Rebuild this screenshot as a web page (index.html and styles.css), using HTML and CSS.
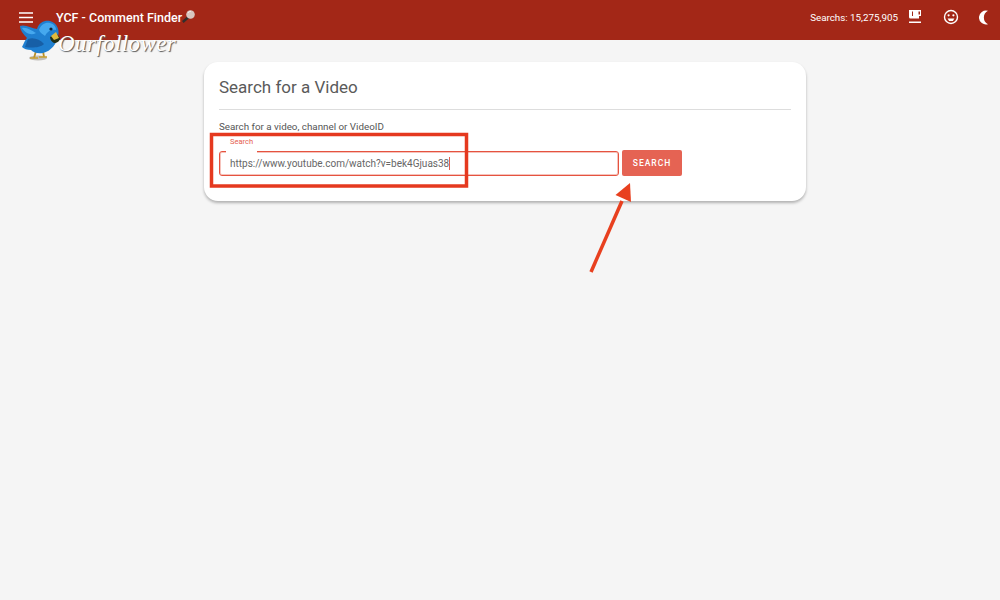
FILE: index.html

```html
<!DOCTYPE html>
<html lang="en">
<head>
    <meta charset="UTF-8">
    <meta name="viewport" content="width=device-width, initial-scale=1.0">
    <title>YCF - Comment Finder</title>
    <link rel="stylesheet" href="styles.css">
</head>
<body>

    <header class="topbar">
        <div class="topbar-left">
            <svg class="menu-icon" width="14" height="11" viewBox="0 0 14 11"><path d="M0 1h14M0 5.500h14M0 10h14" stroke="#fff" stroke-width="1.400" fill="none"/></svg>
            <span class="app-title">YCF - Comment Finder</span>
            <svg class="lens-icon" width="14" height="15" viewBox="0 0 14 15">
                <path d="M6.500 8 .8 13" stroke="#332e2c" stroke-width="2.400"/>
                <circle cx="8.500" cy="5.500" r="4.300" fill="#d8c6bf"/>
                <path d="M6 4A3 3 0 0 1 9 2.300" stroke="#f3ebe7" fill="none"/>
            </svg>
        </div>
        <div class="topbar-right">
            <span class="search-count">Searchs: 15,275,905</span>
            <svg class="cup-icon" width="14" height="14" viewBox="0 0 14 14"><path fill="#fff" d="M1 0h12v6h-2v2.500H2.500A1.500 1.500 0 0 1 1 7zM10.500 1.500V4.500H12V1.500zM1 11.500h12V13H1z"/><path fill="#a32717" d="M4 1.500h1V6H4z"/></svg>
            <svg class="face-icon" width="16" height="16" viewBox="0 0 16 16">
                <circle cx="8" cy="8" r="6.500" fill="none" stroke="#fff" stroke-width="1.400"/>
                <circle cx="5.600" cy="6.300" r="1.100" fill="#fff"/>
                <circle cx="10.400" cy="6.300" r="1.100" fill="#fff"/>
                <path d="M4.600 9.400h6.800A3.500 3.500 0 0 1 4.600 9.400z" fill="#fff"/>
            </svg>
            <svg class="moon-icon" width="10" height="15" viewBox="0 0 10 14"><path fill="#fff" d="M9 .3A7 7 0 1 0 9 13.700 7.500 7.500 0 0 1 9 .3z"/></svg>
        </div>
    </header>

    <main class="page">
        <section class="card">
            <h2 class="card-title">Search for a Video</h2>
            <p class="card-label">Search for a video, channel or VideoID</p>
            <div class="search-row">
                <div class="search-field">
                    <span class="field-label">Search</span>
                    <span class="field-value">https://www.youtube.com/watch?v=bek4Gjuas38</span>
                    <span class="caret"></span>
                </div>
                <button class="search-button">SEARCH</button>
            </div>
        </section>
    </main>

    <!-- watermark over the header -->
    <div class="watermark">
        <svg width="44" height="44" viewBox="0 0 44 44">
            <ellipse cx="19" cy="40" rx="9" ry="2.500" fill="#8f8a80" opacity="0.5"/>
            <path d="M17 33 15 40M24 33l1 6" stroke="#b8902a" stroke-width="1.800" fill="none"/>
            <path d="M11 40h8M20 39h8" stroke="#c9a02f" stroke-width="1.600"/>
            <path fill="#1f7fd0" d="M1 8C6 6 12 10 18 11 20 4 26 2 31 3 38 5 41 12 39 18 38 26 32 33 24 35 18 36 14 34 12 32 8 32 5 31 3 29 5 25 6 22 8 20 4 16 1 12 1 8z"/>
            <path fill="#45a8ee" d="M20 12C22 6 27 4 31 5 35 6 37 9 37 12 32 11 28 14 26 18 24 16 21 15 20 12zM3 10C8 9 13 13 17 15 12 18 6 15 3 10z"/>
            <path fill="#175fa6" d="M9 21C14 19 21 21 25 26 21 30 12 30 6 29 7 26 8 24 9 21z"/>
            <path fill="#223018" d="M31 19 38 16 41 20C41 23 38 25 35 25 33 24 31 22 31 19z"/>
            <path fill="#e0b93c" d="M32 18 37 14 40 20 35 22z"/>
            <circle cx="32" cy="11" r="1.600" fill="#10243a"/>
        </svg>
        <span class="watermark-text">Ourfollower</span>
    </div>

    <!-- annotations drawn on top of the screenshot -->
    <svg class="annotation" width="1000" height="600" viewBox="0 0 1000 600">
        <rect x="211.500" y="134.500" width="255" height="51.500" fill="none" stroke="#e5391f" stroke-width="3.500"/>
        <path d="M591 272 622 201" stroke="#e8401f" stroke-width="3.500" fill="none"/>
        <path d="M630 183 615.500 195 631 202z" fill="#e8401f"/>
    </svg>

</body>
</html>
```

FILE: styles.css

```css
body {
    font-family: 'Roboto', sans-serif;
    margin: 0;
    padding: 0;
    background-color: #f5f5f5;
    color: #555;
    height: 600px;
    overflow: hidden;
}
.topbar {
    display: flex;
    justify-content: space-between;
    align-items: center;
    box-sizing: border-box;
    height: 40px;
    padding-bottom: 6px;
    background-color: #a32717;
    color: white;
    font-weight: 500;
}
.topbar-left {
    display: flex;
    align-items: center;
    padding-left: 19px;
}
.menu-icon {
    margin-right: 23px;
}
.app-title {
    font-size: 12.500px;
}
.lens-icon {
    margin-left: 0;
    margin-top: -1px;
}
.topbar-right {
    display: flex;
    align-items: center;
    padding-right: 11px;
}
.search-count {
    font-size: 9.800px;
    font-weight: 400;
    margin-right: 10px;
}
.cup-icon {
    margin-right: 21px;
}
.face-icon {
    margin-right: 20px;
}
.page {
    display: flex;
    justify-content: center;
    padding: 22px 0 0 10px;
}
.card {
    width: 602px;
    height: 139px;
    box-sizing: border-box;
    padding: 15px;
    background-color: white;
    border-radius: 14px;
    box-shadow: 0px 2px 3px rgba(0, 0, 0, 0.28);
}
.card-title {
    margin: 0;
    padding-bottom: 11px;
    border-bottom: 1px solid #ddd;
    font-size: 17px;
    font-weight: 400;
    line-height: 21px;
    color: #5a5a5a;
}
.card-label {
    margin: 11px 0 0;
    font-size: 9.800px;
    line-height: 12px;
    color: #555;
}
.search-row {
    display: flex;
    align-items: center;
    gap: 3px;
    margin-top: 17px;
}
.search-field {
    position: relative;
    display: flex;
    align-items: center;
    box-sizing: border-box;
    width: 400px;
    height: 25px;
    padding-left: 10px;
    border: 1px solid #e5533f;
    border-radius: 3px;
    box-shadow: inset 0 0 0 1px rgba(229, 83, 63, 0.35);
}
.field-label {
    position: absolute;
    top: -15px;
    left: 6px;
    padding: 0 4px 7px;
    background-color: white;
    font-size: 7.500px;
    line-height: 9px;
    color: #e5604e;
}
.field-value {
    font-size: 10px;
    color: #666;
}
.caret {
    width: 1px;
    height: 13px;
    background-color: #e5604e;
}
.search-button {
    width: 60px;
    height: 26px;
    padding: 0;
    border: none;
    border-radius: 2px;
    background-color: #e56353;
    color: white;
    font-family: 'Roboto', sans-serif;
    font-size: 8.500px;
    font-weight: 500;
    letter-spacing: 1px;
}
.watermark {
    position: absolute;
    top: 18px;
    left: 19px;
    display: flex;
    align-items: flex-start;
}
.watermark-text {
    margin: 13px 0 0 -5px;
    font-family: 'Liberation Serif', serif;
    font-style: italic;
    font-size: 23px;
    letter-spacing: 0.400px;
    color: white;
    text-shadow: 1px 1px 1px #555;
}
.annotation {
    position: absolute;
    top: 0;
    left: 0;
}
```
